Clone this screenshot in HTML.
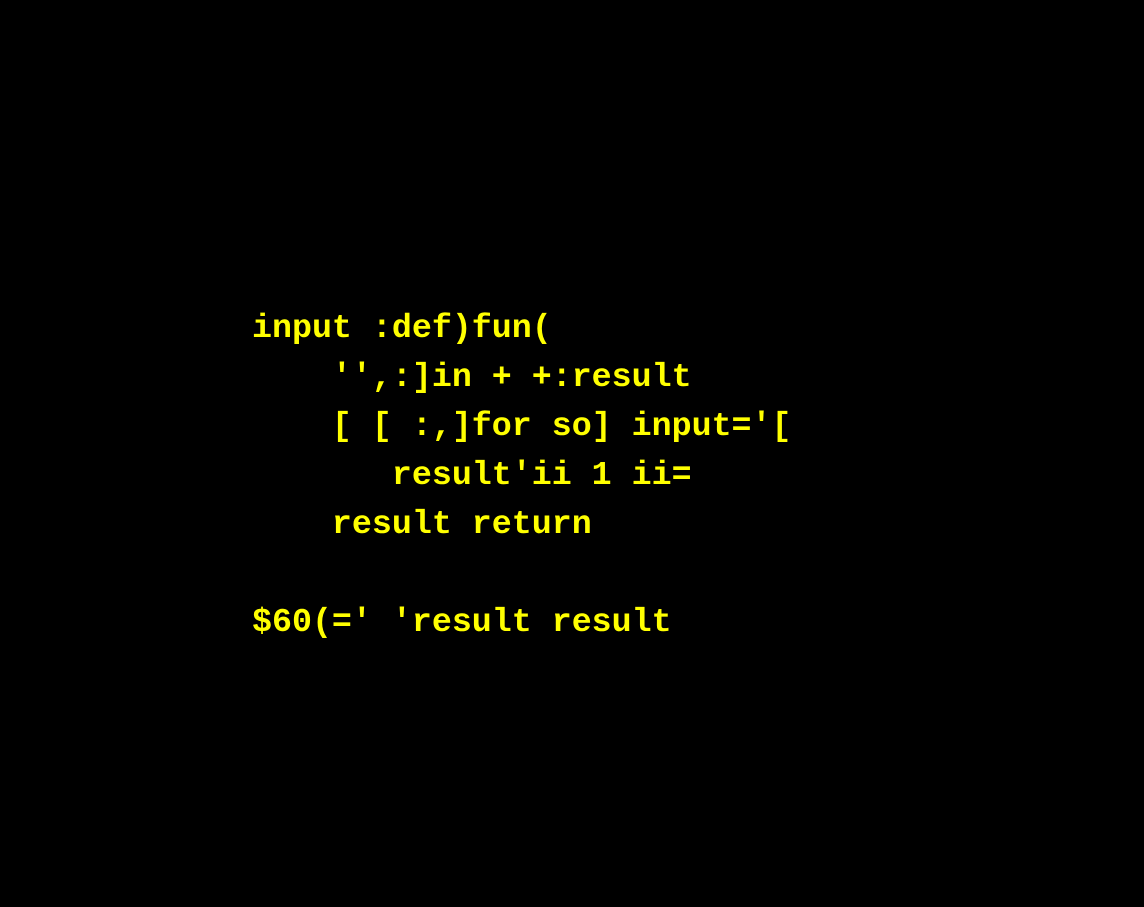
<!DOCTYPE html>
<html><head><style>
html,body{margin:0;padding:0;background:#000;width:1144px;height:907px;overflow:hidden}
pre{position:absolute;left:252px;top:304px;margin:0;font-family:"Liberation Mono",monospace;font-weight:bold;font-size:33.3px;line-height:49px;color:#ffff00}
</style></head><body>
<pre>input :def)fun(
    '',:]in + +:result
    [ [ :,]for so] input='[
       result'ii 1 ii=
    result return

$60(=' 'result result</pre>
</body></html>
